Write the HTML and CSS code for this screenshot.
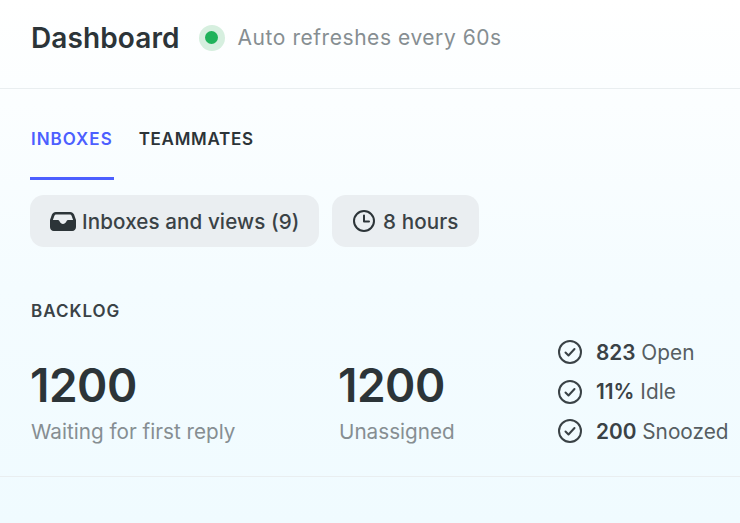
FILE: index.html
```html
<!DOCTYPE html>
<html lang="en">
<head>
  <meta charset="UTF-8" />
  <title>Dashboard</title>
  <link rel="stylesheet" href="styles.css">
</head>
<body>
  <header class="top">
    <h1>Dashboard</h1>
    <span class="status"><span class="status-dot"></span></span>
    <span class="refresh">Auto refreshes every 60s</span>
  </header>

  <nav class="tabs">
    <a class="tab active">INBOXES</a>
    <a class="tab">TEAMMATES</a>
  </nav>

  <div class="filters">
    <button class="chip chip-inbox">
      <svg width="26" height="19" viewBox="0 0 27 19" preserveAspectRatio="none"><path fill="#2c3438" fill-rule="evenodd" d="M6 0H21C23 0 24 1 25 2.500L27 8V15C27 17 25.500 19 23 19H4C1.500 19 0 17 0 15V8L2 2.500C3 1 4 0 6 0ZM6.500 2.500C5.700 2.500 5 3 4.600 3.800L3 8H8C9 8 9.500 8.500 10 9.500C10.800 11 12 12 13.500 12C15 12 16.200 11 17 9.500C17.500 8.500 18 8 19 8H24L22.400 3.800C22 3 21.300 2.500 20.500 2.500Z"/></svg>
      <span>Inboxes and views (9)</span>
    </button>
    <button class="chip chip-time">
      <svg width="24" height="24" viewBox="0 0 24 24" fill="none" stroke="#2c3438" stroke-width="2" stroke-linecap="round" stroke-linejoin="round"><circle cx="12" cy="12" r="10"/><path d="M12 6.500V12.500H17"/></svg>
      <span>8 hours</span>
    </button>
  </div>

  <section class="backlog">
    <h2>BACKLOG</h2>
    <div class="stats">
      <div class="stat stat-first">
        <div class="num">1200</div>
        <div class="label">Waiting for first reply</div>
      </div>
      <div class="stat stat-second">
        <div class="num">1200</div>
        <div class="label">Unassigned</div>
      </div>
      <ul class="checks">
        <li>
          <svg width="26" height="26" viewBox="0 0 26 26" fill="none" stroke="#3a4246" stroke-width="2" stroke-linecap="round" stroke-linejoin="round"><circle cx="13" cy="13" r="11"/><path d="M8.500 13.500l3 3 6-6.500"/></svg>
          <span><b>823</b> Open</span>
        </li>
        <li>
          <svg width="26" height="26" viewBox="0 0 26 26" fill="none" stroke="#3a4246" stroke-width="2" stroke-linecap="round" stroke-linejoin="round"><circle cx="13" cy="13" r="11"/><path d="M8.500 13.500l3 3 6-6.500"/></svg>
          <span><b>11%</b> Idle</span>
        </li>
        <li>
          <svg width="26" height="26" viewBox="0 0 26 26" fill="none" stroke="#3a4246" stroke-width="2" stroke-linecap="round" stroke-linejoin="round"><circle cx="13" cy="13" r="11"/><path d="M8.500 13.500l3 3 6-6.500"/></svg>
          <span><b>200</b> Snoozed</span>
        </li>
      </ul>
    </div>
  </section>
</body>
</html>
```
FILE: styles.css
```css
:root {
  --primary: #4c5fff;
  --text: #2c3438;
  --muted: #868e92;
  --line: #e9eef0;
  --chip: #eaeef1;
}
html, body {
  height: 100%;
}
body {
  margin: 0;
  overflow: hidden;
  font-family: Inter, 'Noto Sans', sans-serif;
  color: var(--text);
  background: linear-gradient(180deg, #ffffff 0%, #f4fcff 55%, #f0fbff 100%);
}
.top {
  display: flex;
  align-items: center;
  height: 89px;
  padding: 0 30px 13px 31px;
  box-sizing: border-box;
  border-bottom: 1px solid var(--line);
}
.top h1 {
  margin: 0;
  font-size: 28px;
  font-weight: 600;
  letter-spacing: 0.1px;
}
.status {
  display: flex;
  align-items: center;
  justify-content: center;
  width: 26px;
  height: 26px;
  margin-left: 19px;
  border-radius: 50%;
  background: #d6efdf;
}
.status-dot {
  width: 13px;
  height: 13px;
  border-radius: 50%;
  background: #1fb25a;
}
.refresh {
  margin-left: 13px;
  font-size: 21px;
  color: var(--muted);
  letter-spacing: 0.55px;
}
.tabs {
  display: flex;
  gap: 25px;
  padding: 0 30px;
  margin-top: 38px;
}
.tab {
  height: 50px;
  font-size: 17px;
  font-weight: 600;
  letter-spacing: 0.7px;
  line-height: 24px;
  padding-left: 1px;
}
.tab.active {
  color: var(--primary);
  border-bottom: 3px solid var(--primary);
  letter-spacing: 1px;
  padding-right: 1px;
  margin-right: -1px;
}
.filters {
  display: flex;
  gap: 13px;
  padding: 0 30px;
  margin-top: 15px;
}
.chip {
  display: flex;
  align-items: center;
  gap: 6px;
  height: 52px;
  border: 0;
  border-radius: 14px;
  background: var(--chip);
  color: #3a4246;
  font-family: inherit;
  font-size: 20.6px;
  font-weight: 500;
  letter-spacing: 0.1px;
}
.chip span {
  padding-top: 1px;
}
.chip-inbox {
  width: 289px;
  padding: 0 0 0 20px;
}
.chip-time {
  width: 147px;
  padding: 0 0 0 20px;
  gap: 7px;
}
.backlog {
  padding: 53px 10px 0 30px;
  height: 230px;
  box-sizing: border-box;
  border-bottom: 1px solid var(--line);
}
.backlog h2 {
  margin: 0;
  padding-left: 1px;
  font-size: 17px;
  line-height: 22px;
  font-weight: 600;
  letter-spacing: 1px;
  color: #3a4246;
}
.stats {
  display: flex;
}
.stat {
  margin-top: 35px;
}
.stat-first {
  width: 308px;
}
.stat-second {
  width: 219px;
}
.num {
  font-size: 46px;
  line-height: 56px;
  font-weight: 600;
  letter-spacing: -0.5px;
}
.label {
  margin-top: 5px;
  padding-left: 1px;
  font-size: 20.7px;
  line-height: 28px;
  color: var(--muted);
}
.checks {
  list-style: none;
  margin: 15px 0 0;
  padding: 0;
  display: flex;
  flex-direction: column;
  gap: 9.5px;
}
.checks li {
  display: flex;
  align-items: center;
  gap: 13px;
  height: 30px;
  font-size: 20.8px;
  color: #565e62;
  white-space: nowrap;
}
.checks b {
  font-weight: 600;
  color: #3a4246;
}
```
